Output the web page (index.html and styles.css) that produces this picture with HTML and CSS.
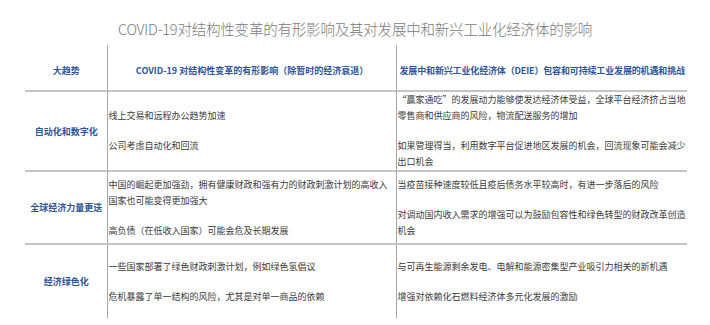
FILE: index.html
```html
<!DOCTYPE html>
<html lang="zh-CN">
<head>
    <meta charset="UTF-8">
    <meta name="viewport" content="width=device-width, initial-scale=1.0">
    <title>COVID-19对结构性变革的有形影响</title>
    <link rel="stylesheet" href="styles.css">
</head>
<body>
    <h1 class="titulo">COVID-19对结构性变革的有形影响及其对发展中和新兴工业化经济体的影响</h1>

    <table class="tabela">
        <colgroup>
            <col class="col-tendencia">
            <col class="col-impacto">
            <col class="col-deie">
        </colgroup>
        <thead>
            <tr class="linha-cabecalho">
                <th>大趋势</th>
                <th>COVID-19 对结构性变革的有形影响（除暂时的经济衰退）</th>
                <th class="esq">发展中和新兴工业化经济体（DEIE）包容和可持续工业发展的机遇和挑战</th>
            </tr>
        </thead>
        <tbody>
            <tr class="linha-1">
                <th class="tendencia">自动化和数字化</th>
                <td>
                    <p>线上交易和远程办公趋势加速</p>
                    <p>公司考虑自动化和回流</p>
                </td>
                <td>
                    <p>“赢家通吃”的发展动力能够使发达经济体受益，全球平台经济挤占当地零售商和供应商的风险，物流配送服务的增加</p>
                    <p>如果管理得当，利用数字平台促进地区发展的机会，回流现象可能会减少出口机会</p>
                </td>
            </tr>
            <tr class="linha-2">
                <th class="tendencia">全球经济力量更迭</th>
                <td>
                    <p>中国的崛起更加强劲，拥有健康财政和强有力的财政刺激计划的高收入国家也可能变得更加强大</p>
                    <p>高负债（在低收入国家）可能会危及长期发展</p>
                </td>
                <td>
                    <p>当疫苗接种速度较低且疫后债务水平较高时，有进一步落后的风险</p>
                    <p>对调动国内收入需求的增强可以为鼓励包容性和绿色转型的财政改革创造机会</p>
                </td>
            </tr>
            <tr class="linha-3">
                <th class="tendencia">经济绿色化</th>
                <td>
                    <p>一些国家部署了绿色财政刺激计划，例如绿色氢倡议</p>
                    <p>危机暴露了单一结构的风险，尤其是对单一商品的依赖</p>
                </td>
                <td>
                    <p>与可再生能源剩余发电、电解和能源密集型产业吸引力相关的新机遇</p>
                    <p>增强对依赖化石燃料经济体多元化发展的激励</p>
                </td>
            </tr>
        </tbody>
    </table>
</body>
</html>
```

FILE: styles.css
```css
body {
    margin: 0;
    padding: 0;
    background-color: white;
    font-family: "Noto Sans CJK SC", "Noto Sans", sans-serif;
    color: #3a3a3a;
}

.titulo {
    margin: 0;
    height: 45px;
    line-height: 58px;
    text-align: center;
    font-size: 14.5px;
    font-weight: 300;
    color: #7a7a7a;
    letter-spacing: -0.2px;
}

.tabela {
    margin-left: 25px;
    width: 662px;
    table-layout: fixed;
    border-collapse: collapse;
}

.col-tendencia {
    width: 82px;
}

.col-impacto {
    width: 289px;
}

.col-deie {
    width: 291px;
}

.tabela th,
.tabela td {
    padding: 0 0 0 1px;
    vertical-align: middle;
    border-left: 1px solid #a6a6a6;
}

.tabela th:first-child {
    border-left: none;
}

.tabela th {
    font-size: 9px;
    font-weight: bold;
    color: #2f5597;
    text-align: center;
}

.tabela th.esq {
    text-align: left;
    white-space: nowrap;
    letter-spacing: -0.15px;
    padding-left: 3px;
}

.tabela tr {
    border-bottom: 2px solid #c4c4c4;
}

.tabela tbody tr:last-child {
    border-bottom: none;
}

.linha-cabecalho {
    height: 46px;
}

.linha-cabecalho th {
    padding-top: 6px;
}

.linha-1 {
    height: 77px;
}

.linha-2 {
    height: 73px;
}

.linha-3 {
    height: 74px;
}

.tabela td {
    font-size: 9px;
    line-height: 16px;
    color: #3a3a3a;
}

.tabela p {
    margin: 0;
}

.tabela p + p {
    margin-top: 14px;
}
```
